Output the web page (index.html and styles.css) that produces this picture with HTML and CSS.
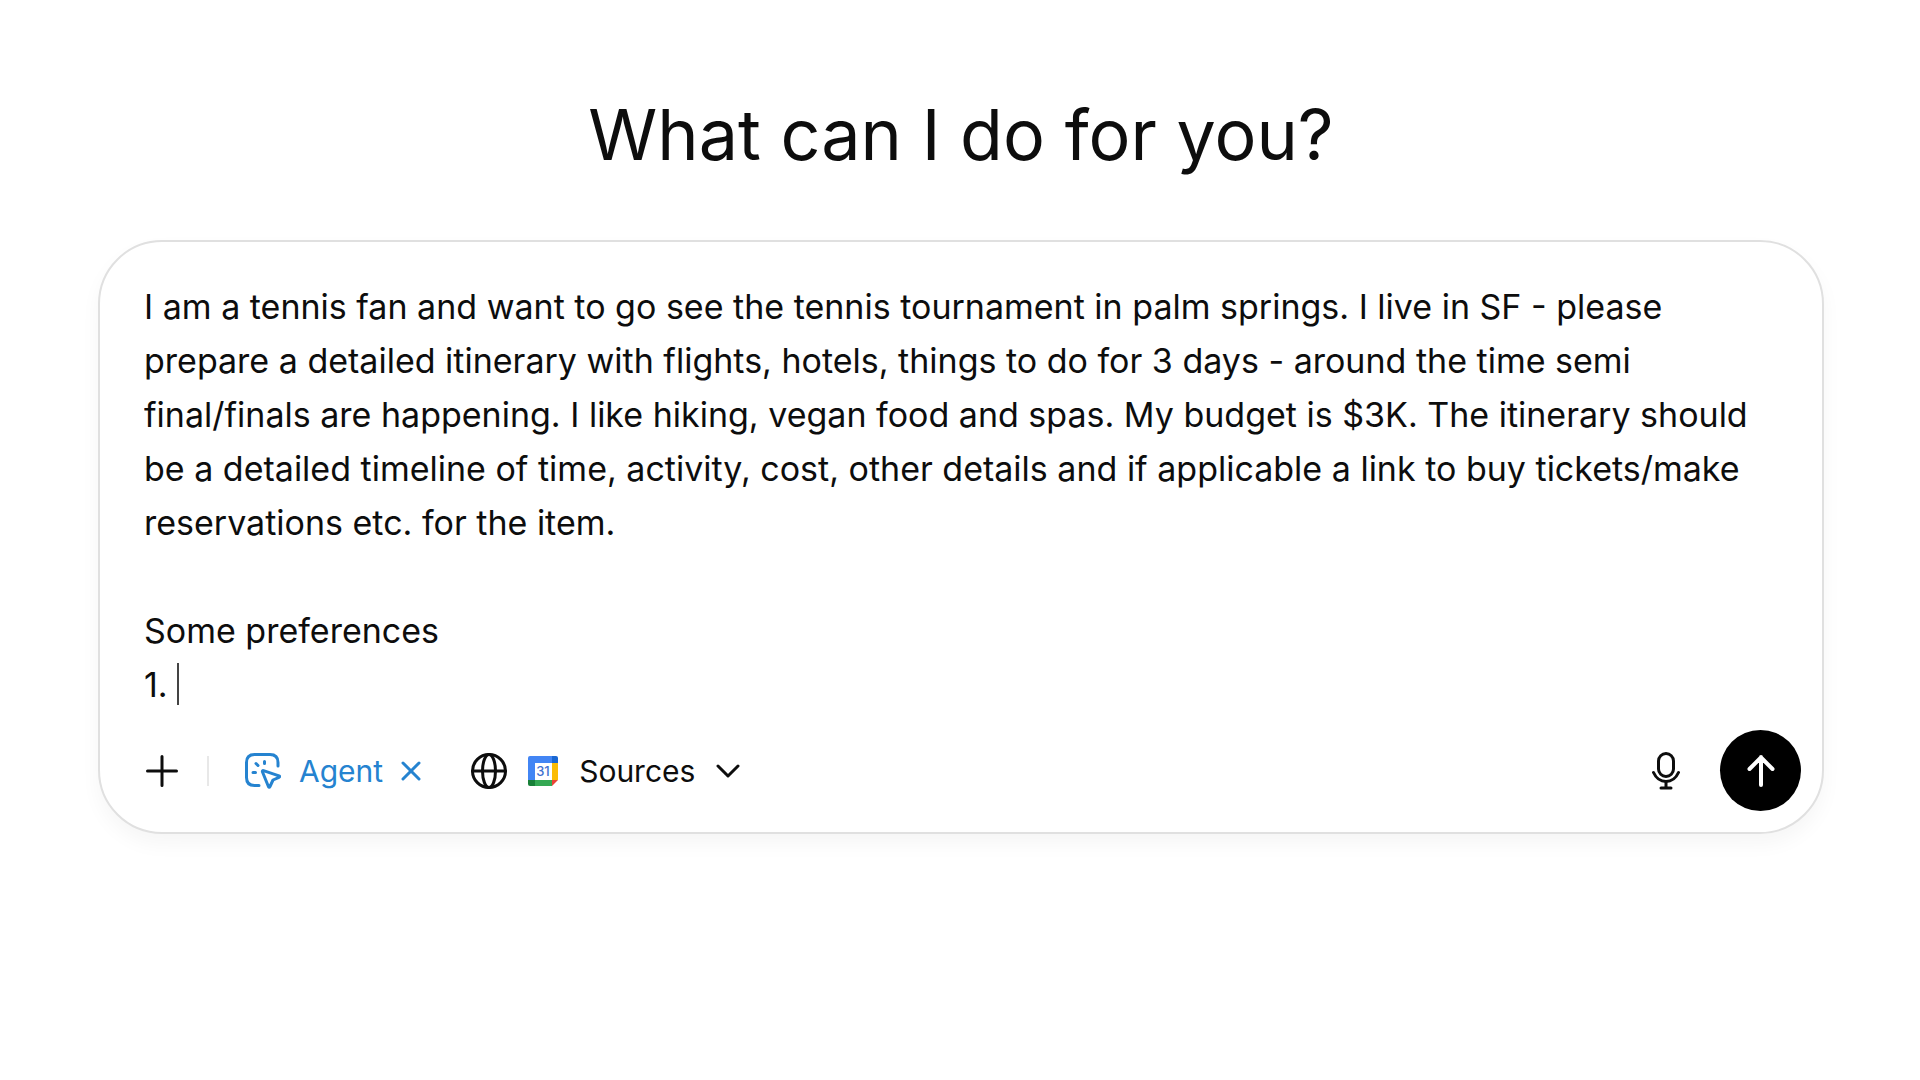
FILE: index.html
```
<!DOCTYPE html>
<html lang="en">
<head>
    <meta charset="UTF-8">
    <meta name="viewport" content="width=device-width, initial-scale=1.0">
    <title>What can I do for you?</title>
    <link rel="stylesheet" href="styles.css">
</head>
<body>
<main class="page">
    <h1 class="title">What can I do for you?</h1>

    <form class="composer">
        <div class="prompt-wrap">
            <textarea class="prompt" rows="8" aria-label="Message" spellcheck="false">I am a tennis fan and want to go see the tennis tournament in palm springs. I live in SF - please prepare a detailed itinerary with flights, hotels, things to do for 3 days - around the time semi final/finals are happening. I like hiking, vegan food and spas. My budget is $3K. The itinerary should be a detailed timeline of time, activity, cost, other details and if applicable a link to buy tickets/make reservations etc. for the item.

Some preferences
1. </textarea>
            <span class="caret"></span>
        </div>

        <div class="toolbar">
            <button type="button" class="tool" aria-label="Add">
                <svg class="icon-plus" viewBox="0 0 32 32"><path d="M16 1.5v29M1.5 16h29"/></svg>
            </button>
            <span class="divider"></span>
            <button type="button" class="tool agent">
                <svg class="icon-agent" viewBox="0 0 36 36">
                    <path d="M33 13V9.500Q33 1.500 25 1.500H9.500Q1.500 1.500 1.500 9.500V24.500Q1.500 32.500 9.500 32.500H14"/>
                    <path d="M18.500 17.600L34 22.800Q35.300 23.500 34 24.300L28 27L25 33.500Q24.200 35 23.400 33.500L17.400 18.700Q17.200 17.300 18.500 17.600Z"/>
                    <path d="M8 19.500h2.500M11 10.500l2 2M19.500 8.500v2"/>
                </svg>
                Agent
                <svg class="icon-close" viewBox="0 0 20 20"><path d="M2 2l16 16M18 2L2 18"/></svg>
            </button>
            <button type="button" class="tool sources">
                <svg class="icon-globe" viewBox="0 0 36 36">
                    <circle cx="18" cy="18" r="16.500"/>
                    <ellipse cx="18" cy="18" rx="6.500" ry="16.500"/>
                    <path d="M1.500 18h33"/>
                </svg>
                <svg class="icon-calendar" viewBox="0 0 30 30">
                    <path fill="#4285f4" d="M2 0H24V7H7V24H0V2Q0 0 2 0Z"/>
                    <path fill="#1967d2" d="M24 0H28Q30 0 30 2V7H24Z"/>
                    <path fill="#fbbc04" d="M24 7H30V24H24Z"/>
                    <path fill="#188038" d="M0 24H7V30H2Q0 30 0 28Z"/>
                    <path fill="#34a853" d="M7 24H24V30H7Z"/>
                    <path fill="#ea4335" d="M24 24H30L24 30Z"/>
                    <path fill="#fff" d="M7 7H24V24H7Z"/>
                    <text x="15" y="20" text-anchor="middle">31</text>
                </svg>
                Sources
                <svg class="icon-chevron" viewBox="0 0 24 14"><path d="M2 2l10 10L22 2"/></svg>
            </button>

            <button type="button" class="tool mic" aria-label="Dictate">
                <svg class="icon-mic" viewBox="0 0 28 38">
                    <rect x="6.500" y="1.500" width="15" height="23" rx="7.500"/>
                    <path d="M1.500 20.500C4 26 8 29.500 14 29.500S24 26 26.500 20.500M14 29.500V36M9 36h10"/>
                </svg>
            </button>
            <button type="submit" class="send" aria-label="Send">
                <svg class="icon-send" viewBox="0 0 28 32"><path d="M14 30V2M2.500 14L14 2.500L25.500 14"/></svg>
            </button>
        </div>
    </form>
</main>
</body>
</html>
```

FILE: styles.css
```
* {
    box-sizing: border-box;
}
body {
    margin: 0;
    background-color: #fff;
    color: #0d0d0d;
    font-family: Inter, "Liberation Sans", sans-serif;
}
.page {
    padding: 90px 96px 40px 98px;
}
.title {
    margin: 0 0 60px;
    font-size: 70px;
    font-weight: 400;
    line-height: 90px;
    text-align: center;
}
.composer {
    padding: 38px 21px 21px 44px;
    border: 2px solid #e0e0e0;
    border-radius: 64px;
    background-color: #fff;
    box-shadow: 0 10px 20px rgba(0, 0, 0, 0.04);
}
.prompt-wrap {
    position: relative;
}
.prompt {
    display: block;
    width: 100%;
    padding: 0 24px 0 0;
    border: none;
    outline: none;
    resize: none;
    overflow: hidden;
    background: transparent;
    color: inherit;
    font-family: inherit;
    font-size: 34px;
    line-height: 54px;
}
/* text cursor, sits after the last line of the prompt */
.caret {
    position: absolute;
    left: 33px;
    bottom: 7px;
    width: 2px;
    height: 42px;
    background-color: #444;
}
.toolbar {
    display: flex;
    align-items: center;
    margin-top: 18px;
    padding-left: 2px;
}
button {
    display: flex;
    align-items: center;
    padding: 0;
    border: none;
    background: none;
    color: #0d0d0d;
    font-family: inherit;
    font-size: 30px;
    line-height: 40px;
    cursor: pointer;
}
svg {
    display: block;
    flex: none;
    fill: none;
    stroke: currentColor;
    stroke-width: 3;
    stroke-linecap: round;
    stroke-linejoin: round;
}
.divider {
    width: 2px;
    height: 30px;
    margin: 0 36px 0 29px;
    background-color: #e8e8e8;
}
.agent {
    gap: 18px;
    color: #2583d0;
}
.sources {
    gap: 21px;
    margin-left: 50px;
}
.mic {
    margin-left: auto;
}
.send {
    justify-content: center;
    width: 81px;
    height: 81px;
    margin-left: 40px;
    border-radius: 50%;
    background-color: #000;
    color: #fff;
}
.icon-plus {
    width: 32px;
    height: 32px;
}
.icon-agent {
    width: 36px;
    height: 36px;
}
.icon-close {
    width: 20px;
    height: 20px;
}
.icon-globe {
    width: 36px;
    height: 36px;
}
.icon-calendar {
    width: 30px;
    height: 30px;
    stroke: none;
}
.icon-calendar text {
    fill: #3f6fd0;
    font-size: 13px;
    font-weight: 500;
}
.icon-chevron {
    width: 24px;
    height: 14px;
}
.icon-mic {
    width: 28px;
    height: 38px;
}
.icon-send {
    width: 28px;
    height: 32px;
}
.icon-send path {
    stroke-width: 4;
}
```
